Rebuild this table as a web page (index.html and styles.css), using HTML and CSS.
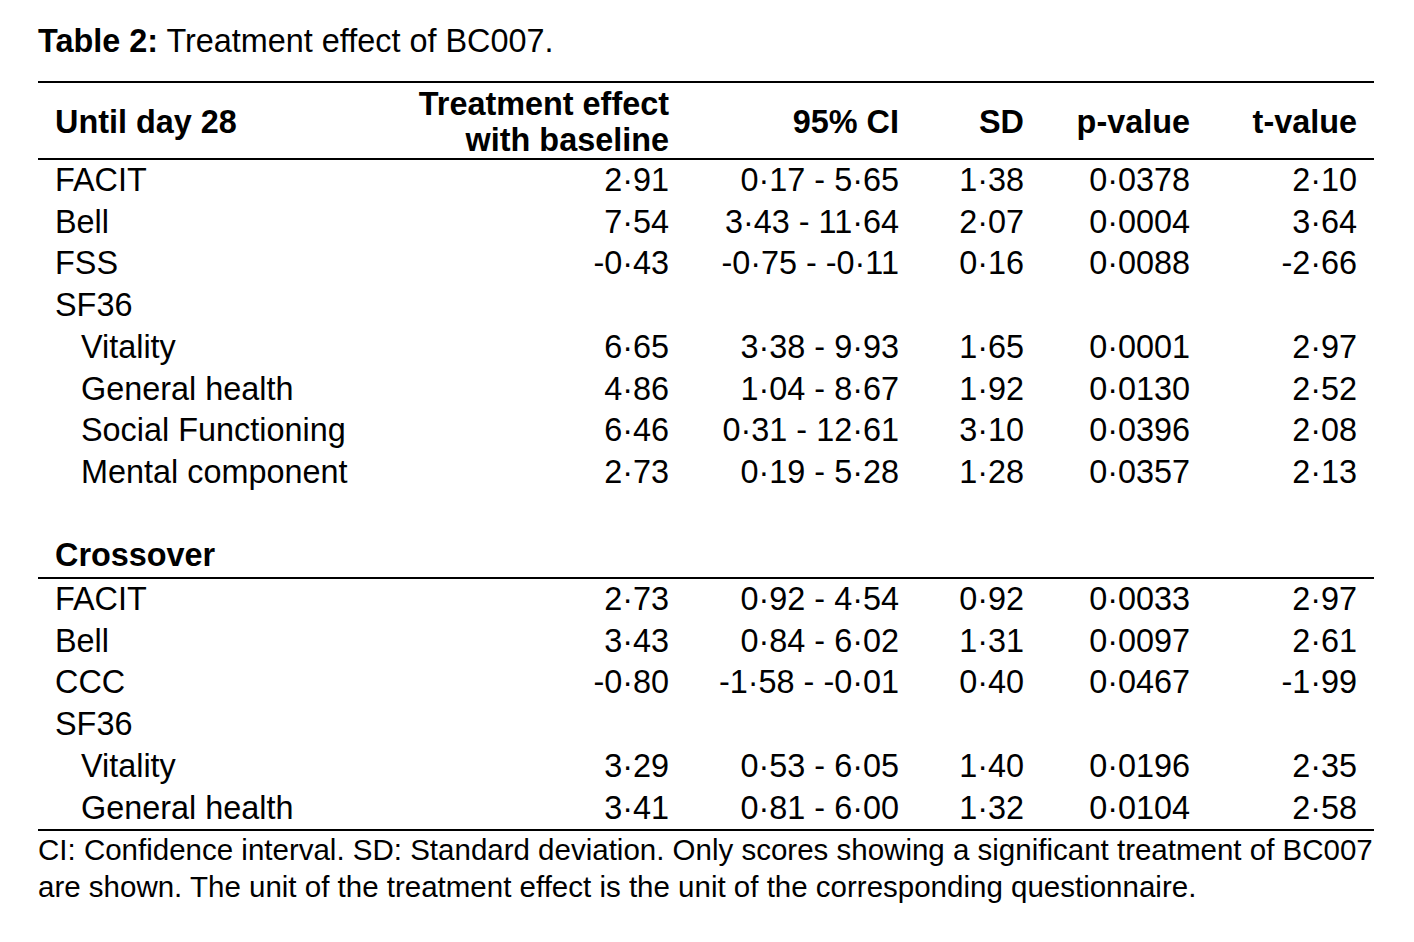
FILE: index.html
```html
<!DOCTYPE html>
<html lang="en">
<head>
<meta charset="utf-8">
<title>Table 2</title>
<link rel="stylesheet" href="styles.css">
</head>
<body>
<div class="page">
  <p class="caption"><b>Table 2:</b> Treatment effect of BC007.</p>
  <table class="results">
    <colgroup>
      <col class="c-label"><col class="c-effect"><col class="c-ci"><col class="c-sd"><col class="c-p"><col class="c-t">
    </colgroup>
    <thead>
      <tr class="head">
        <th class="label">Until day 28</th>
        <th>Treatment effect<br>with baseline</th>
        <th>95% CI</th>
        <th>SD</th>
        <th>p-value</th>
        <th>t-value</th>
      </tr>
    </thead>
    <tbody class="first">
      <tr><td class="label">FACIT</td><td>2·91</td><td>0·17 - 5·65</td><td>1·38</td><td>0·0378</td><td>2·10</td></tr>
      <tr><td class="label">Bell</td><td>7·54</td><td>3·43 - 11·64</td><td>2·07</td><td>0·0004</td><td>3·64</td></tr>
      <tr><td class="label">FSS</td><td>-0·43</td><td>-0·75 - -0·11</td><td>0·16</td><td>0·0088</td><td>-2·66</td></tr>
      <tr><td class="label">SF36</td><td></td><td></td><td></td><td></td><td></td></tr>
      <tr><td class="label sub">Vitality</td><td>6·65</td><td>3·38 - 9·93</td><td>1·65</td><td>0·0001</td><td>2·97</td></tr>
      <tr><td class="label sub">General health</td><td>4·86</td><td>1·04 - 8·67</td><td>1·92</td><td>0·0130</td><td>2·52</td></tr>
      <tr><td class="label sub">Social Functioning</td><td>6·46</td><td>0·31 - 12·61</td><td>3·10</td><td>0·0396</td><td>2·08</td></tr>
      <tr><td class="label sub">Mental component</td><td>2·73</td><td>0·19 - 5·28</td><td>1·28</td><td>0·0357</td><td>2·13</td></tr>
      <tr class="spacer"><td colspan="6"></td></tr>
      <tr class="section"><th class="label" colspan="6">Crossover</th></tr>
    </tbody>
    <tbody class="second">
      <tr><td class="label">FACIT</td><td>2·73</td><td>0·92 - 4·54</td><td>0·92</td><td>0·0033</td><td>2·97</td></tr>
      <tr><td class="label">Bell</td><td>3·43</td><td>0·84 - 6·02</td><td>1·31</td><td>0·0097</td><td>2·61</td></tr>
      <tr><td class="label">CCC</td><td>-0·80</td><td>-1·58 - -0·01</td><td>0·40</td><td>0·0467</td><td>-1·99</td></tr>
      <tr><td class="label">SF36</td><td></td><td></td><td></td><td></td><td></td></tr>
      <tr><td class="label sub">Vitality</td><td>3·29</td><td>0·53 - 6·05</td><td>1·40</td><td>0·0196</td><td>2·35</td></tr>
      <tr><td class="label sub">General health</td><td>3·41</td><td>0·81 - 6·00</td><td>1·32</td><td>0·0104</td><td>2·58</td></tr>
    </tbody>
  </table>
  <p class="note">CI: Confidence interval. SD: Standard deviation. Only scores showing a significant treatment of BC007 are shown. The unit of the treatment effect is the unit of the corresponding questionnaire.</p>
</div>
</body>
</html>
```

FILE: styles.css
```css
html, body {
  margin: 0;
  padding: 0;
  background: #ffffff;
}

body {
  font-family: "Liberation Sans", Arial, Helvetica, sans-serif;
  color: #000000;
  font-size: 32.4px;
}

.page {
  padding: 23px 40px 0 38px;
  width: 1336px;
}

.caption {
  margin: 0 0 22px 0;
  line-height: 36px;
}

.caption b {
  font-weight: bold;
}

.results {
  width: 1336px;
  border-collapse: collapse;
  table-layout: fixed;
}

.c-label { width: 350px; }
.c-effect { width: 298px; }
.c-ci { width: 230px; }
.c-sd { width: 125px; }
.c-p { width: 166px; }
.c-t { width: 167px; }

.results th,
.results td {
  padding: 0 17px;
  text-align: right;
  white-space: nowrap;
  font-weight: normal;
}

.results td {
  line-height: 41.7px;
  height: 41.7px;
  vertical-align: middle;
}

.results .label {
  text-align: left;
}

.results .sub {
  padding-left: 43px;
}

.head {
  border-top: 2px solid #000;
  border-bottom: 2px solid #000;
}

.head th {
  font-weight: bold;
  line-height: 36px;
  height: 73px;
  padding-top: 2px;
  vertical-align: middle;
}

.section th {
  font-weight: bold;
  line-height: 41.7px;
  height: 41.7px;
}

.second {
  border-top: 2px solid #000;
  border-bottom: 2px solid #000;
}

.note {
  margin: 0;
  font-size: 29.5px;
  line-height: 37px;
}
```
